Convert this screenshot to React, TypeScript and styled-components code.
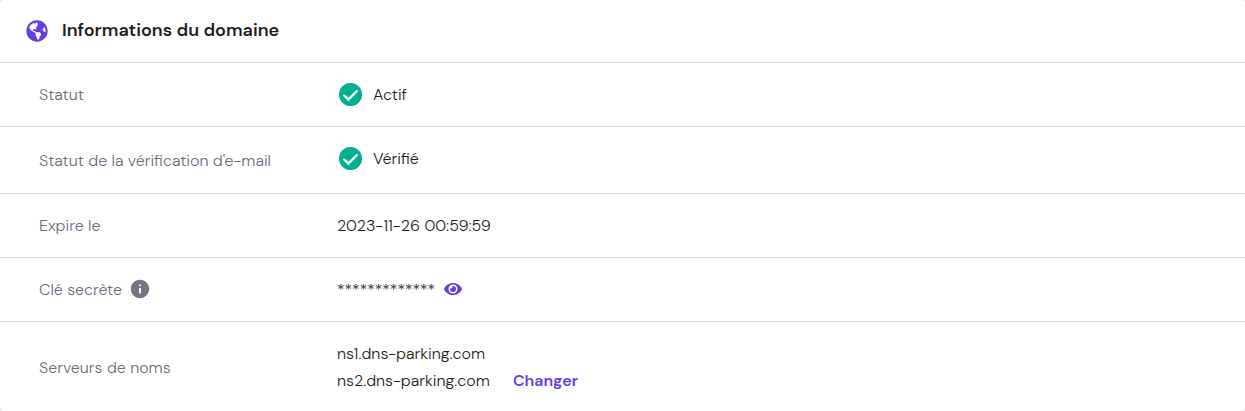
import React from 'react';
import styled, { createGlobalStyle } from 'styled-components';
import { FaEye, FaGlobeAmericas } from 'react-icons/fa';
import { MdInfo } from 'react-icons/md';

const GlobalStyle = createGlobalStyle`
  * { box-sizing: border-box; }
  body {
    margin: 0;
    background: #e6e6ea;
    font-family: "DM Sans", Inter, "Liberation Sans", sans-serif;
  }
`;

const Card = styled.section`
  background: #fff;
  border-radius: 4px;
  overflow: hidden;
  color: #1d1e20;
  font-size: 16px;
  font-weight: 300;
  line-height: 27px;
`;

const Header = styled.header`
  display: flex;
  align-items: center;
  gap: 14px;
  height: 62px;
  padding: 0 26px;
  color: #673de6;
`;

const Title = styled.h2`
  margin: 0;
  padding-bottom: 2px;
  color: #1d1e20;
  font-size: 18px;
  font-weight: 600;
  line-height: 26px;
`;

const List = styled.dl`
  margin: 0;
`;

const Row = styled.div`
  display: grid;
  grid-template-columns: 298px 1fr;
  align-items: center;
  padding: 18px 39px;
  border-top: 1px solid #d8d8d8;

  &:last-child {
    padding-bottom: 17px;
  }
`;

const Label = styled.dt`
  display: flex;
  align-items: center;
  gap: 7px;
  color: #6a6d7e;

  svg {
    margin-bottom: 2px;
    color: #727586;
  }
`;

const Value = styled.dd`
  display: flex;
  align-items: center;
  gap: 9px;
  min-height: 27px;
  margin: 0;
`;

const Status = styled(Value)<{ $spaced?: boolean }>`
  gap: 11px;
  padding-left: 2px;
  padding-bottom: ${({ $spaced }) => ($spaced ? 3 : 0)}px;
`;

const ServerValue = styled(Value)`
  align-items: flex-end;
  gap: 23px;
`;

const IconButton = styled.button`
  display: flex;
  padding: 0 0 2px;
  border: 0;
  background: none;
  color: #673de6;
  cursor: pointer;
`;

const TextButton = styled(IconButton)`
  padding: 0;
  font: inherit;
  font-weight: 600;
`;

const CheckIcon = () => (
  <svg width="23" height="23" viewBox="2 2 20 20" aria-hidden="true">
    <circle cx="12" cy="12" r="10" fill="#00b090" />
    <path d="M6 12.3l4.1 4.1 8-8" fill="none" stroke="#fff" strokeWidth="2" />
  </svg>
);

export default function App() {
  return (
    <>
      <GlobalStyle />
      <Card>
        <Header>
          <FaGlobeAmericas size={22} />
          <Title>Informations du domaine</Title>
        </Header>
        <List>
          <Row>
            <Label>Statut</Label>
            <Status><CheckIcon />Actif</Status>
          </Row>
          <Row>
            <Label>Statut de la vérification d'e-mail</Label>
            <Status $spaced><CheckIcon />Vérifié</Status>
          </Row>
          <Row>
            <Label>Expire le</Label>
            <Value>2023-11-26 00:59:59</Value>
          </Row>
          <Row>
            <Label>Clé secrète <MdInfo size={22} /></Label>
            <Value>
              *************
              <IconButton type="button" aria-label="Afficher la clé secrète">
                <FaEye size={18} />
              </IconButton>
            </Value>
          </Row>
          <Row>
            <Label>Serveurs de noms</Label>
            <ServerValue>
              <span>ns1.dns-parking.com<br />ns2.dns-parking.com</span>
              <TextButton type="button">Changer</TextButton>
            </ServerValue>
          </Row>
        </List>
      </Card>
    </>
  );
}
